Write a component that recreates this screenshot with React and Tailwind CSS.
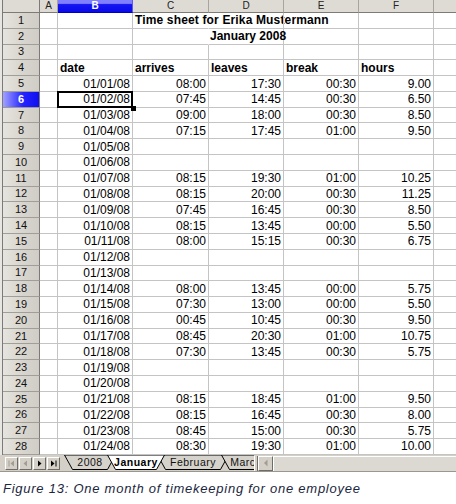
import React from "react";

const rows = [
  { n: 1 },
  { n: 2 },
  { n: 3 },
  { n: 4, head: true },
  { n: 5, v: ["01/01/08", "08:00", "17:30", "00:30", "9.00"] },
  { n: 6, v: ["01/02/08", "07:45", "14:45", "00:30", "6.50"], sel: true },
  { n: 7, v: ["01/03/08", "09:00", "18:00", "00:30", "8.50"] },
  { n: 8, v: ["01/04/08", "07:15", "17:45", "01:00", "9.50"] },
  { n: 9, v: ["01/05/08", "", "", "", ""] },
  { n: 10, v: ["01/06/08", "", "", "", ""] },
  { n: 11, v: ["01/07/08", "08:15", "19:30", "01:00", "10.25"] },
  { n: 12, v: ["01/08/08", "08:15", "20:00", "00:30", "11.25"] },
  { n: 13, v: ["01/09/08", "07:45", "16:45", "00:30", "8.50"] },
  { n: 14, v: ["01/10/08", "08:15", "13:45", "00:00", "5.50"] },
  { n: 15, v: ["01/11/08", "08:00", "15:15", "00:30", "6.75"] },
  { n: 16, v: ["01/12/08", "", "", "", ""] },
  { n: 17, v: ["01/13/08", "", "", "", ""] },
  { n: 18, v: ["01/14/08", "08:00", "13:45", "00:00", "5.75"] },
  { n: 19, v: ["01/15/08", "07:30", "13:00", "00:00", "5.50"] },
  { n: 20, v: ["01/16/08", "00:45", "10:45", "00:30", "9.50"] },
  { n: 21, v: ["01/17/08", "08:45", "20:30", "01:00", "10.75"] },
  { n: 22, v: ["01/18/08", "07:30", "13:45", "00:30", "5.75"] },
  { n: 23, v: ["01/19/08", "", "", "", ""] },
  { n: 24, v: ["01/20/08", "", "", "", ""] },
  { n: 25, v: ["01/21/08", "08:15", "18:45", "01:00", "9.50"] },
  { n: 26, v: ["01/22/08", "08:15", "16:45", "00:30", "8.00"] },
  { n: 27, v: ["01/23/08", "08:45", "15:00", "00:30", "5.75"] },
  { n: 28, v: ["01/24/08", "08:30", "19:30", "01:00", "10.00"] },
];

const cell = "shrink-0 h-full border-r border-b border-[#c4c4c4] flex items-center text-[12px] leading-none whitespace-nowrap";
const num = "justify-end pr-[2px] overflow-hidden";
const hd = "font-bold pl-[2px]";

function Row({ r }) {
  const v = r.v || ["", "", "", "", ""];
  return (
    <div className="flex h-[15.8px]">
      <div
        className={
          r.sel
            ? "w-[37px] shrink-0 h-full border-r border-b border-r-[#7c7a74] border-b-[#9c9a94] flex items-center justify-center text-[11px] leading-none font-bold text-white bg-[linear-gradient(to_right,#a2a2ff,#2424ff_55%,#1010f0)]"
            : "w-[37px] shrink-0 h-full border-r border-b border-r-[#7c7a74] border-b-[#a09e98] flex items-center justify-center text-[11px] leading-none text-[#111] bg-[linear-gradient(to_right,#e6e4de,#d8d5ce_55%,#d0cdc6)]"
        }
      >
        {r.n}
      </div>
      <div className={`${cell} w-[18px]`} />
      <div className={`${cell} w-[75px] ${r.head ? hd : num} ${r.sel ? "relative overflow-visible" : ""}`}>
        {r.head ? "date" : v[0]}
        {r.sel && (
          <>
            <div className="absolute -left-[1px] -top-[1px] -right-[1px] -bottom-[1px] border-2 border-black z-10" />
            <div className="absolute -right-[4px] -bottom-[4px] w-[5px] h-[5px] bg-black z-10" />
          </>
        )}
      </div>
      <div
        className={`${cell} w-[76px] ${r.head ? hd : r.n === 1 ? "font-bold pl-[2px] tracking-[0.15px] overflow-visible border-r-transparent" : r.n === 2 ? "border-r-transparent" : num}`}
      >
        {r.head ? "arrives" : r.n === 1 ? "Time sheet for Erika Mustermann" : v[1]}
      </div>
      <div className={`${cell} w-[75px] ${r.head ? hd : r.n === 2 ? "font-bold pl-[1px] overflow-visible" : num}`}>
        {r.head ? "leaves" : r.n === 2 ? "January 2008" : v[2]}
      </div>
      <div className={`${cell} w-[75px] ${r.head ? hd : num}`}>{r.head ? "break" : v[3]}</div>
      <div className={`${cell} w-[75px] ${r.head ? hd : num}`}>{r.head ? "hours" : v[4]}</div>
      <div className={`${cell} flex-1 border-r-0`} />
    </div>
  );
}

const colHead =
  "shrink-0 h-full border-r border-b border-r-[#a8a59e] border-b-[#7e7b74] bg-[#dedbd4] flex items-center justify-center text-[10px] leading-none text-[#222]";

function Tab({ label, w, cls, active }) {
  return (
    <div className={`relative h-[15px] shrink-0 flex items-center justify-center ${cls} ${active ? "z-20" : "z-0"}`}>
      <svg className="absolute left-0 top-0" width={w} height={15} viewBox={`0 0 ${w} 15`}>
        <polygon
          points={`0.5,0 ${w - 0.5},0 ${w - 8.5},14.5 8.5,14.5`}
          fill={active ? "#ffffff" : "#d6d3cc"}
          stroke="#000"
          strokeWidth="1"
        />
      </svg>
      <span className={`relative text-[10.5px] leading-none tracking-[0.5px] ${active ? "font-bold text-black" : "text-[#111]"}`}>
        {label}
      </span>
    </div>
  );
}

function NavBtn({ children }) {
  return (
    <div className="w-[13px] h-[13px] shrink-0 border border-t-white border-l-white border-r-[#6e6c67] border-b-[#6e6c67] bg-[#d4d0c8] flex items-center justify-center">
      {children}
    </div>
  );
}

export default function App() {
  return (
    <div className="w-[456px] h-[504px] bg-white overflow-hidden font-['Liberation_Sans',Arial,sans-serif] text-black">
      <div className="flex h-[455px] overflow-hidden">
        <div className="w-[3px] shrink-0 h-full bg-[#e8e6e1] border-r border-[#7a7a7a]" />
        <div className="flex-1 flex flex-col">
          <div className="flex h-[13px] shrink-0">
            <div className="w-[37px] shrink-0 h-full border-r border-b border-r-[#7c7a74] border-b-[#7e7b74] bg-[#dedbd4]" />
            <div className={`${colHead} w-[18px]`}>A</div>
            <div className="w-[75px] shrink-0 h-full border-r border-b border-r-[#5a5af0] border-b-[#0000c0] bg-[linear-gradient(#8080ff_0%,#8080ff_28%,#1414f4_38%,#0a0ae8_100%)] flex items-center justify-center text-[10px] leading-none font-bold text-white">
              B
            </div>
            <div className={`${colHead} w-[76px]`}>C</div>
            <div className={`${colHead} w-[75px]`}>D</div>
            <div className={`${colHead} w-[75px]`}>E</div>
            <div className={`${colHead} w-[75px]`}>F</div>
            <div className={`${colHead} flex-1 border-r-0`} />
          </div>
          {rows.map((r) => (
            <Row key={r.n} r={r} />
          ))}
        </div>
      </div>

      <div className="flex items-center h-[17px] bg-[#d4d0c8] border-b border-[#9a978f]">
        <div className="flex items-center gap-[1px] pl-[5px] w-[64px] shrink-0">
          <NavBtn>
            <svg width="7" height="7" viewBox="0 0 7 7">
              <rect x="0.5" y="0.5" width="1" height="6" fill="#a09d96" />
              <polygon points="6,0.5 6,6.5 2.5,3.5" fill="#a09d96" />
            </svg>
          </NavBtn>
          <NavBtn>
            <svg width="7" height="7" viewBox="0 0 7 7">
              <polygon points="5,0.5 5,6.5 1.5,3.5" fill="#a09d96" />
            </svg>
          </NavBtn>
          <NavBtn>
            <svg width="7" height="7" viewBox="0 0 7 7">
              <polygon points="2,0.5 2,6.5 5.5,3.5" fill="#000" />
            </svg>
          </NavBtn>
          <NavBtn>
            <svg width="7" height="7" viewBox="0 0 7 7">
              <polygon points="1,0.5 1,6.5 4.5,3.5" fill="#000" />
              <rect x="5.5" y="0.5" width="1" height="6" fill="#000" />
            </svg>
          </NavBtn>
        </div>
        <div className="w-[190px] shrink-0 h-[15px] self-start overflow-hidden flex">
          <Tab label="2008" w={52} cls="w-[52px]" />
          <Tab label="January" w={58} cls="w-[58px] -ml-[9px]" active />
          <Tab label="February" w={72} cls="w-[72px] -ml-[8px]" />
          <Tab label="March" w={50} cls="w-[50px] -ml-[8px]" />
        </div>
        <div className="w-[4px] h-[15px] shrink-0 border-l border-r border-l-white border-r-[#6e6c67] bg-[#d4d0c8]" />
        <div className="w-[15px] h-[15px] shrink-0 border border-t-white border-l-white border-r-[#6e6c67] border-b-[#6e6c67] bg-[#d4d0c8] flex items-center justify-center">
          <svg width="6" height="8" viewBox="0 0 6 8">
            <polygon points="4.5,0.5 4.5,7.5 1,4" fill="#a09d96" />
          </svg>
        </div>
        <div className="flex-1 h-[15px] border-t border-l border-t-white border-l-white bg-[#dcd9d2]" />
      </div>

      <div className="pt-[9px] pl-[3px] text-[13px] italic leading-[16px] tracking-[0.75px] text-[#1b2640]">
        Figure 13: One month of timekeeping for one employee
      </div>
    </div>
  );
}
